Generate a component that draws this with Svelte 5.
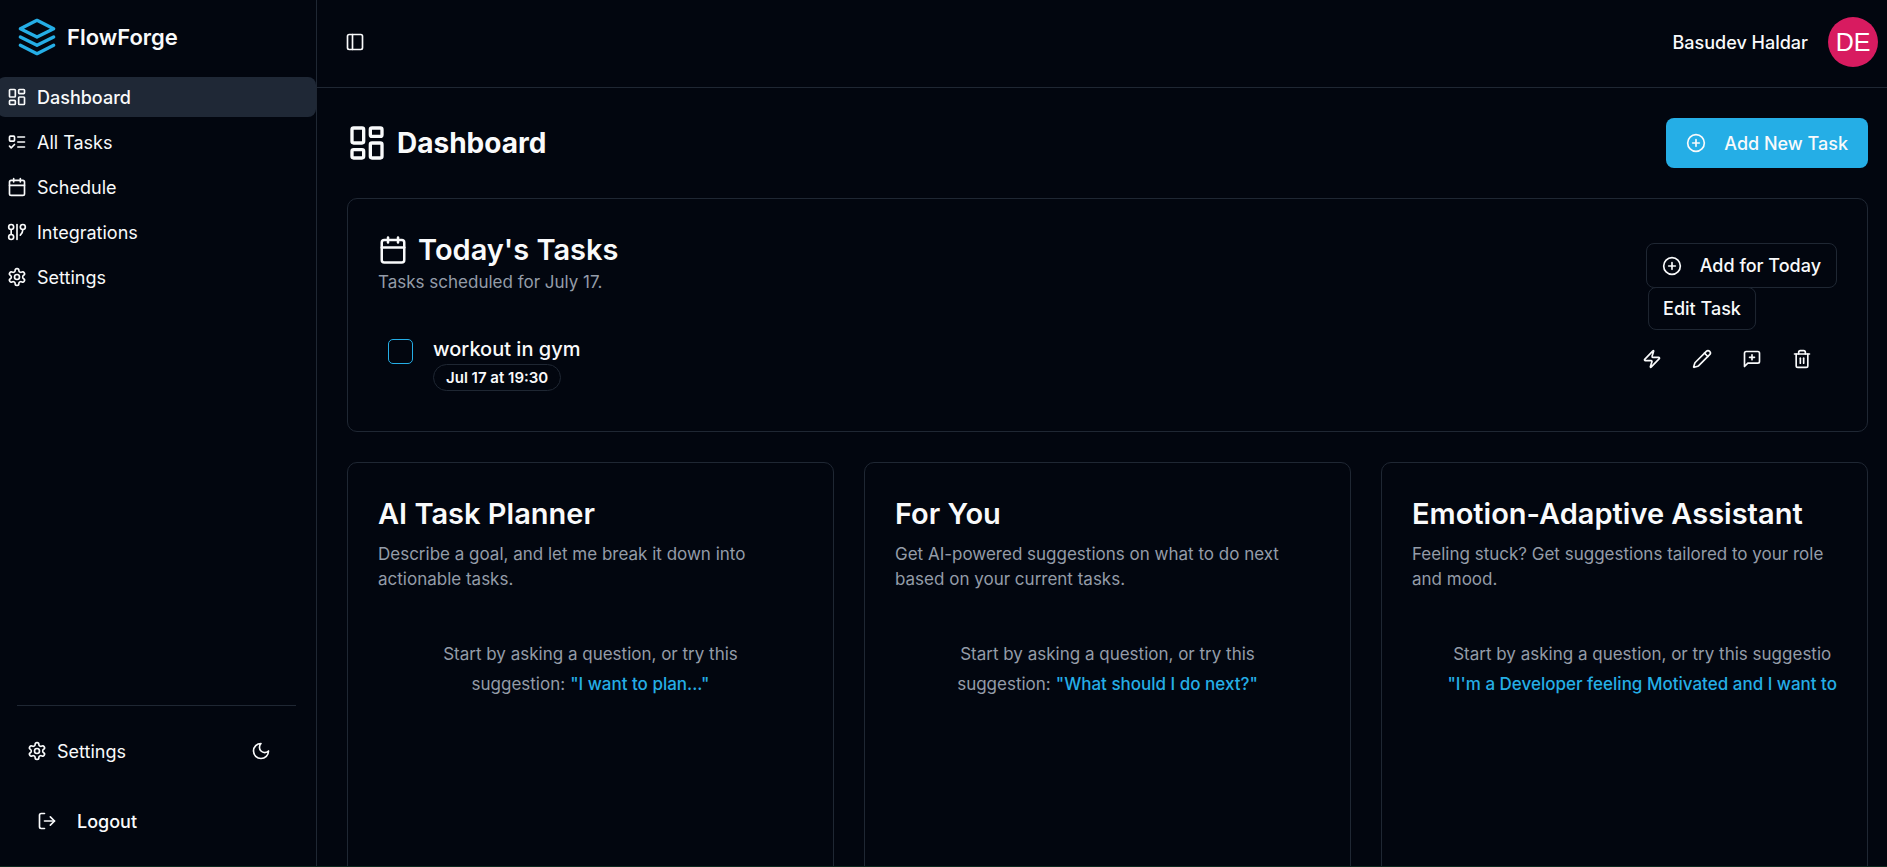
<script>
  const icons = {
    layers: '<path d="M12 2 22 7 12 12 2 7Z"/><path d="m2 12 10 5 10-5"/><path d="m2 17 10 5 10-5"/>',
    dashboard: '<rect width="7" height="9" x="3" y="3" rx="1"/><rect width="7" height="5" x="14" y="3" rx="1"/><rect width="7" height="9" x="14" y="12" rx="1"/><rect width="7" height="5" x="3" y="16" rx="1"/>',
    todo: '<rect x="3" y="5" width="6" height="6" rx="1"/><path d="m3 17 2 2 4-4"/><path d="M13 6h8"/><path d="M13 12h8"/><path d="M13 18h8"/>',
    calendar: '<path d="M8 2v4"/><path d="M16 2v4"/><rect width="18" height="18" x="3" y="4" rx="2"/><path d="M3 10h18"/>',
    integrations: '<circle cx="5" cy="6" r="3"/><path d="M5 9v6"/><circle cx="5" cy="18" r="3"/><path d="M12 3v18"/><circle cx="19" cy="6" r="3"/><path d="M16 15.7A9 9 0 0 0 19 9"/>',
    settings: '<path d="M12.22 2h-.44a2 2 0 0 0-2 2v.18a2 2 0 0 1-1 1.73l-.43.25a2 2 0 0 1-2 0l-.15-.08a2 2 0 0 0-2.73.73l-.22.38a2 2 0 0 0 .73 2.73l.15.1a2 2 0 0 1 1 1.72v.51a2 2 0 0 1-1 1.74l-.15.09a2 2 0 0 0-.73 2.73l.22.38a2 2 0 0 0 2.73.73l.15-.08a2 2 0 0 1 2 0l.43.25a2 2 0 0 1 1 1.73V20a2 2 0 0 0 2 2h.44a2 2 0 0 0 2-2v-.18a2 2 0 0 1 1-1.73l.43-.25a2 2 0 0 1 2 0l.15.08a2 2 0 0 0 2.73-.73l.22-.39a2 2 0 0 0-.73-2.73l-.15-.08a2 2 0 0 1-1-1.74v-.5a2 2 0 0 1 1-1.74l.15-.09a2 2 0 0 0 .73-2.73l-.22-.38a2 2 0 0 0-2.73-.73l-.15.08a2 2 0 0 1-2 0l-.43-.25a2 2 0 0 1-1-1.73V4a2 2 0 0 0-2-2z"/><circle cx="12" cy="12" r="3"/>',
    moon: '<path d="M12 3a6 6 0 0 0 9 9 9 9 0 1 1-9-9Z"/>',
    logout: '<path d="M9 21H5a2 2 0 0 1-2-2V5a2 2 0 0 1 2-2h4"/><path d="m16 17 5-5-5-5"/><path d="M21 12H9"/>',
    panel: '<rect width="18" height="18" x="3" y="3" rx="2"/><path d="M9 3v18"/>',
    plus: '<circle cx="12" cy="12" r="10"/><path d="M8 12h8"/><path d="M12 8v8"/>',
    zap: '<path d="M4 14a1 1 0 0 1-.78-1.63l9.9-10.2a.5.5 0 0 1 .86.46l-1.92 6.02A1 1 0 0 0 13 10h7a1 1 0 0 1 .78 1.63l-9.9 10.2a.5.5 0 0 1-.86-.46l1.92-6.02A1 1 0 0 0 11 14z"/>',
    pencil: '<path d="M21.174 6.812a1 1 0 0 0-3.986-3.987L3.842 16.174a2 2 0 0 0-.5.83l-1.321 4.352a.5.5 0 0 0 .623.622l4.353-1.32a2 2 0 0 0 .83-.497z"/><path d="m15 5 4 4"/>',
    comment: '<path d="M21 15a2 2 0 0 1-2 2H7l-4 4V5a2 2 0 0 1 2-2h14a2 2 0 0 1 2 2z"/><path d="M12 7v6"/><path d="M9 10h6"/>',
    trash: '<path d="M3 6h18"/><path d="M19 6v14c0 1-1 2-2 2H7c-1 0-2-1-2-2V6"/><path d="M8 6V4c0-1 1-2 2-2h4c1 0 2 1 2 2v2"/><path d="M10 11v6"/><path d="M14 11v6"/>'
  };

  const nav = [
    { label: 'Dashboard', icon: 'dashboard', active: true },
    { label: 'All Tasks', icon: 'todo' },
    { label: 'Schedule', icon: 'calendar' },
    { label: 'Integrations', icon: 'integrations' },
    { label: 'Settings', icon: 'settings' }
  ];

  const assistants = [
    {
      title: 'AI Task Planner',
      text: 'Describe a goal, and let me break it down into actionable tasks.',
      lead: 'Start by asking a question, or try this',
      label: 'suggestion:',
      prompt: '"I want to plan..."'
    },
    {
      title: 'For You',
      text: 'Get AI-powered suggestions on what to do next based on your current tasks.',
      lead: 'Start by asking a question, or try this',
      label: 'suggestion:',
      prompt: '"What should I do next?"'
    },
    {
      title: 'Emotion-Adaptive Assistant',
      text: 'Feeling stuck? Get suggestions tailored to your role and mood.',
      lead: 'Start by asking a question, or try this suggestio',
      prompt: '"I\'m a Developer feeling Motivated and I want to',
      end: true
    }
  ];

  let done = $state(false);
</script>

{#snippet icon(name, size = 20)}
  <svg width={size} height={size} viewBox="0 0 24 24" fill="none" stroke="currentColor" stroke-width="2" stroke-linecap="round" stroke-linejoin="round" aria-hidden="true">
    {@html icons[name]}
  </svg>
{/snippet}

<div class="app">
  <aside class="sidebar">
    <a class="brand" href="#home">
      <span class="brand-mark">{@render icon('layers', 40)}</span>
      <span>FlowForge</span>
    </a>
    <nav class="nav" aria-label="Main">
      {#each nav as item}
        <a class="nav-link" class:active={item.active} href="#{item.label}">
          {@render icon(item.icon)}
          <span>{item.label}</span>
        </a>
      {/each}
    </nav>
    <div class="side-footer">
      <div class="side-row">
        <a class="side-link" href="#preferences">{@render icon('settings')}<span>Settings</span></a>
        <button class="icon-button" aria-label="Toggle theme">{@render icon('moon')}</button>
      </div>
      <button class="logout">{@render icon('logout')}<span>Logout</span></button>
    </div>
  </aside>

  <div class="page">
    <header class="topbar">
      <button class="icon-button" aria-label="Toggle sidebar">{@render icon('panel')}</button>
      <div class="user">
        <span class="user-name">Basudev Haldar</span>
        <span class="avatar">DE</span>
      </div>
    </header>

    <main class="content">
      <div class="heading">
        <h1>{@render icon('dashboard', 40)}<span>Dashboard</span></h1>
        <button class="primary">{@render icon('plus')}<span>Add New Task</span></button>
      </div>

      <section class="card">
        <div class="today-head">
          <div>
            <h2>{@render icon('calendar', 30)}<span>Today's Tasks</span></h2>
            <p class="muted">Tasks scheduled for July 17.</p>
          </div>
          <button class="outline">{@render icon('plus')}<span>Add for Today</span></button>
        </div>
        <div class="task">
          <input id="task-workout" type="checkbox" bind:checked={done} />
          <div class="task-body">
            <label for="task-workout">workout in gym</label>
            <span class="badge">Jul 17 at 19:30</span>
          </div>
          <div class="actions">
            <button class="icon-button" aria-label="Prioritize">{@render icon('zap')}</button>
            <div class="tip-anchor">
              <button class="icon-button" aria-label="Edit" aria-describedby="edit-tip">{@render icon('pencil')}</button>
              <span class="tooltip" id="edit-tip" role="tooltip">Edit Task</span>
            </div>
            <button class="icon-button" aria-label="Add comment">{@render icon('comment')}</button>
            <button class="icon-button" aria-label="Delete">{@render icon('trash')}</button>
          </div>
        </div>
      </section>

      <div class="assistants">
        {#each assistants as item}
          <section class="card assistant">
            <h2>{item.title}</h2>
            <p class="muted">{item.text}</p>
            <div class="chat" class:end={item.end}>
              <div class="hint">
                <p>{item.lead}</p>
                <div class="hint-row">
                  {#if item.label}<span>{item.label}</span>{/if}
                  <button class="prompt">{item.prompt}</button>
                </div>
              </div>
            </div>
          </section>
        {/each}
      </div>
    </main>
  </div>
</div>

<style>
  :global(body) {
    margin: 0;
    background: #02060f;
  }

  .app,
  .app * {
    box-sizing: border-box;
  }

  .app {
    --border: #1f2733;
    --muted: #949ca8;
    --primary: #25aee6;
    display: flex;
    height: 100vh;
    overflow: hidden;
    border-bottom: 1px solid #0e2a20;
    background: #02060f;
    color: #f9fafb;
    font-family: Inter, sans-serif;
    font-size: 18px;
    line-height: 25px;
  }

  h1,
  h2,
  p {
    margin: 0;
  }

  a {
    color: inherit;
    text-decoration: none;
  }

  button {
    padding: 0;
    border: 0;
    background: none;
    color: inherit;
    font: inherit;
    cursor: pointer;
  }

  svg {
    display: block;
    flex: none;
  }

  .sidebar {
    display: flex;
    flex: none;
    flex-direction: column;
    width: 317px;
    border-right: 1px solid var(--border);
  }

  .brand {
    display: flex;
    align-items: center;
    gap: 10px;
    height: 74px;
    padding: 0 17px;
    font-size: 22px;
    font-weight: 600;
  }

  .brand-mark {
    color: var(--primary);
  }

  .nav {
    display: flex;
    flex-direction: column;
    gap: 5px;
    margin: 3px 0 0 -3px;
  }

  .nav-link {
    display: flex;
    align-items: center;
    gap: 10px;
    height: 40px;
    padding: 0 10px;
    border-radius: 8px;
  }

  .nav-link.active {
    background: #1f2836;
    font-weight: 500;
  }

  .side-footer {
    margin: auto 20px 20px 17px;
    padding: 20px 10px 0;
    border-top: 1px solid var(--border);
  }

  .side-row {
    display: flex;
    align-items: center;
    justify-content: space-between;
  }

  .side-link {
    display: flex;
    align-items: center;
    gap: 10px;
  }

  .logout {
    display: flex;
    align-items: center;
    gap: 20px;
    height: 50px;
    margin-top: 20px;
    padding: 0 10px;
    font-weight: 500;
  }

  .icon-button {
    display: grid;
    place-items: center;
    width: 50px;
    height: 50px;
    border-radius: 8px;
  }

  .page {
    display: flex;
    flex: 1;
    flex-direction: column;
    min-width: 0;
  }

  .topbar {
    display: flex;
    flex: none;
    align-items: center;
    justify-content: space-between;
    height: 88px;
    padding: 0 9px 3px 13px;
    border-bottom: 1px solid var(--border);
  }

  .user {
    display: flex;
    align-items: center;
    gap: 20px;
  }

  .user-name {
    font-weight: 500;
  }

  .avatar {
    display: grid;
    place-items: center;
    width: 50px;
    height: 50px;
    border-radius: 50%;
    background: #d81b60;
    color: #fff;
    font-family: "Liberation Sans", Arial, sans-serif;
    font-size: 25px;
  }

  .content {
    display: flex;
    flex: 1;
    flex-direction: column;
    gap: 30px;
    min-height: 0;
    padding: 30px 19px 0 30px;
  }

  .heading {
    display: flex;
    align-items: center;
    justify-content: space-between;
    height: 50px;
  }

  h1 {
    display: flex;
    align-items: center;
    gap: 10px;
    font-size: 28px;
    font-weight: 700;
    line-height: 40px;
  }

  .primary,
  .outline {
    display: flex;
    align-items: center;
    gap: 18px;
    border-radius: 8px;
    font-weight: 500;
    white-space: nowrap;
  }

  .primary {
    height: 50px;
    padding: 0 20px;
    background: var(--primary);
  }

  .outline {
    height: 45px;
    margin-top: 14px;
    padding: 0 15px;
    border: 1px solid var(--border);
  }

  .card {
    padding: 30px;
    border: 1px solid var(--border);
    border-radius: 10px;
  }

  h2 {
    display: flex;
    align-items: center;
    gap: 10px;
    font-size: 29px;
    font-weight: 600;
    line-height: 41px;
  }

  .muted,
  .hint {
    color: var(--muted);
    font-size: 17px;
    line-height: 25px;
  }

  .today-head {
    display: flex;
    align-items: flex-start;
    justify-content: space-between;
  }

  .task {
    display: flex;
    align-items: flex-start;
    gap: 20px;
    margin-top: 29px;
    padding: 10px;
  }

  .task input {
    appearance: none;
    width: 25px;
    height: 25px;
    margin: 5px 0 0;
    border: 1px solid var(--primary);
    border-radius: 5px;
  }

  .task input:checked {
    background: var(--primary);
  }

  .task-body {
    display: flex;
    flex: 1;
    flex-direction: column;
    align-items: flex-start;
  }

  .task-body label {
    font-size: 20px;
    font-weight: 500;
    line-height: 30px;
  }

  .badge {
    padding: 0 12px;
    border: 1px solid var(--border);
    border-radius: 14px;
    font-size: 15px;
    font-weight: 600;
  }

  .actions {
    display: flex;
  }

  .tip-anchor {
    position: relative;
  }

  .tooltip {
    position: absolute;
    bottom: 54px;
    left: 50%;
    padding: 8px 14px;
    border: 1px solid var(--border);
    border-radius: 8px;
    background: #02060f;
    font-weight: 500;
    white-space: nowrap;
    transform: translateX(-50%);
  }

  .assistants {
    display: grid;
    flex: 1;
    grid-template-columns: repeat(3, minmax(0, 1fr));
    gap: 30px;
    min-height: 0;
  }

  .assistant {
    min-height: 600px;
  }

  .assistant .muted {
    margin-top: 8px;
  }

  .chat {
    display: flex;
    justify-content: center;
    margin-top: 47px;
  }

  .chat.end {
    justify-content: flex-end;
  }

  .hint {
    line-height: 30px;
    text-align: center;
  }

  .hint-row {
    display: flex;
    justify-content: center;
    gap: 5px;
  }

  .prompt {
    color: var(--primary);
    font-weight: 500;
    white-space: nowrap;
  }
</style>
